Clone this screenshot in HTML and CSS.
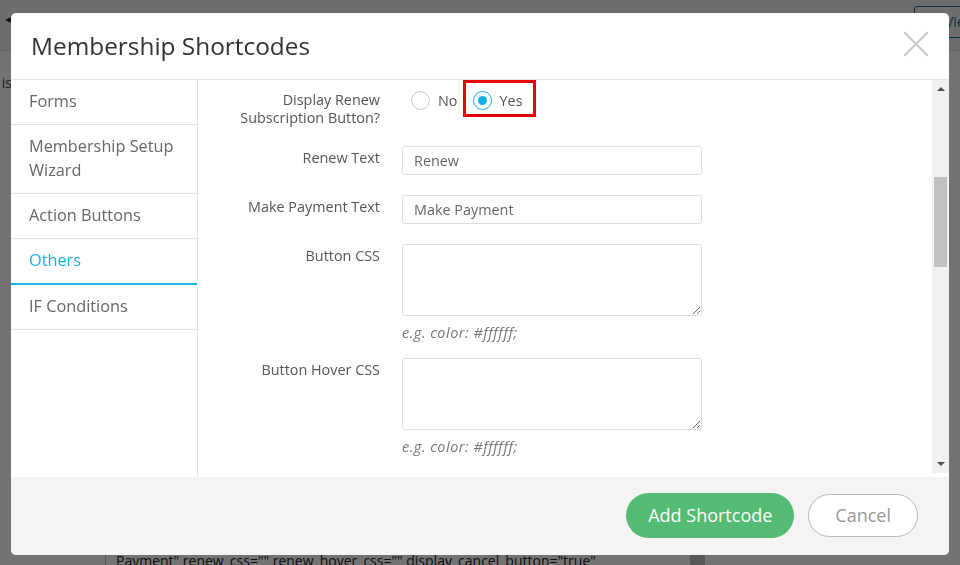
FILE: index.html
```html
<!DOCTYPE html>
<html lang="en">
<head>
    <meta charset="UTF-8">
    <meta name="viewport" content="width=device-width, initial-scale=1.0">
    <title>Membership Shortcodes</title>
    <link rel="stylesheet" href="styles.css">
</head>
<body>
    <!-- page behind the dialog -->
    <div class="page">
        <div class="page-top">
            <span class="back-arrow">&#9666;</span>
            <a class="view-btn" href="#">View</a>
        </div>
        <div class="page-main">
            <div class="page-note"><span>Note: copy the shortcode below, it is</span></div>
        </div>
        <div class="page-code">
            <div class="code-box">[arm_membership_detail renew_text="Renew" make_payment_text="Make
Payment" renew_css="" renew_hover_css="" display_cancel_button="true"</div>
        </div>
    </div>

    <div class="overlay"></div>

    <div class="modal">
        <div class="modal-header">
            <h2 class="modal-title">Membership Shortcodes</h2>
            <button class="close-btn" type="button" aria-label="Close">
                <svg width="26" height="26" viewBox="0 0 26 26">
                    <path d="M1 1L25 25M25 1L1 25" stroke="#c9c9c9" stroke-width="2" fill="none"/>
                </svg>
            </button>
        </div>

        <div class="modal-body">
            <ul class="side-nav">
                <li class="nav-item">Forms</li>
                <li class="nav-item">Membership Setup Wizard</li>
                <li class="nav-item">Action Buttons</li>
                <li class="nav-item active">Others</li>
                <li class="nav-item">IF Conditions</li>
            </ul>

            <div class="form-area">
                <div class="form-row radio-row">
                    <label class="form-label">Display Renew Subscription Button?</label>
                    <div class="radio-group">
                        <span class="radio-option">
                            <span class="radio-circle"></span>No
                        </span>
                        <span class="radio-option checked highlight">
                            <span class="radio-circle"></span>Yes
                        </span>
                    </div>
                </div>

                <div class="form-row">
                    <label class="form-label" for="renew-text">Renew Text</label>
                    <input class="text-input" type="text" id="renew-text" value="Renew">
                </div>

                <div class="form-row">
                    <label class="form-label" for="payment-text">Make Payment Text</label>
                    <input class="text-input" type="text" id="payment-text" value="Make Payment">
                </div>

                <div class="form-row has-hint">
                    <label class="form-label" for="button-css">Button CSS</label>
                    <div class="field">
                        <textarea class="text-area" id="button-css"></textarea>
                        <p class="hint">e.g. color: #ffffff;</p>
                    </div>
                </div>

                <div class="form-row has-hint">
                    <label class="form-label" for="button-hover-css">Button Hover CSS</label>
                    <div class="field">
                        <textarea class="text-area" id="button-hover-css"></textarea>
                        <p class="hint">e.g. color: #ffffff;</p>
                    </div>
                </div>
            </div>

            <div class="scroll-track">
                <span class="arrow-up"></span>
                <span class="scroll-thumb"></span>
                <span class="arrow-down"></span>
            </div>
        </div>

        <div class="modal-footer">
            <button class="btn-primary" type="button">Add Shortcode</button>
            <button class="btn-cancel" type="button">Cancel</button>
        </div>
    </div>
</body>
</html>
```

FILE: styles.css
```css
:root {
    --accent: #1ab0e8;
    --green: #54bb74;
    --border: #dfe3ea;
    --text: #555555;
}

* {
    margin: 0;
    padding: 0;
    box-sizing: border-box;
    font-family: "Open Sans", "DejaVu Sans", sans-serif;
}

body {
    background-color: #ffffff;
    height: 565px;
    overflow: hidden;
}

/* background page */
.page-top {
    height: 51px;
    background-color: #f1f1f1;
    border-bottom: 1px solid #d8d8d8;
    display: flex;
    justify-content: space-between;
    align-items: flex-start;
    padding: 10px 0 0 5px;
}

.back-arrow {
    font-size: 12px;
    color: #222;
}

.view-btn {
    margin-top: -4px;
    margin-right: -36px;
    width: 82px;
    height: 32px;
    border: 1px solid #1f6e8c;
    border-radius: 3px;
    color: #1f6e8c;
    font-size: 14px;
    line-height: 30px;
    padding-left: 30px;
    text-decoration: none;
}

.page-main {
    height: 474px;
    padding-top: 22px;
}

.page-note {
    width: 12px;
    display: flex;
    justify-content: flex-end;
    font-size: 14px;
    color: #444;
}

.page-note span {
    white-space: nowrap;
}

.page-code {
    padding-left: 105px;
}

.code-box {
    width: 600px;
    height: 60px;
    border: 1px solid #bbb;
    border-right: 15px solid #c2c2c2;
    padding: 5px 10px;
    font-size: 14px;
    line-height: 20px;
    color: #222;
    white-space: pre-line;
    overflow: hidden;
}

.overlay {
    position: fixed;
    inset: 0;
    background-color: rgba(0, 0, 0, 0.55);
}

/* dialog */
.modal {
    position: fixed;
    top: 13px;
    left: 11px;
    width: 938px;
    height: 542px;
    background-color: #ffffff;
    border-radius: 5px;
    display: flex;
    flex-direction: column;
    overflow: hidden;
}

.modal-header {
    height: 67px;
    flex-shrink: 0;
    border-bottom: 1px solid #e6e6e6;
    display: flex;
    justify-content: space-between;
    align-items: center;
    padding: 0 20px 2px;
}

.modal-title {
    font-size: 24.4px;
    font-weight: 400;
    color: #333;
}

.close-btn {
    align-self: flex-start;
    margin-top: 18px;
    border: none;
    background: none;
    width: 26px;
    height: 26px;
    cursor: pointer;
}

.close-btn svg {
    display: block;
}

.modal-body {
    flex: 1;
    min-height: 0;
    display: flex;
}

.side-nav {
    list-style: none;
    width: 187px;
    flex-shrink: 0;
    border-right: 1px solid var(--border);
}

.nav-item {
    padding: 9px 18px 11px;
    font-size: 16.3px;
    line-height: 24px;
    color: #666;
    border-bottom: 1px solid var(--border);
    cursor: pointer;
}

.nav-item.active {
    color: var(--accent);
    border-bottom: 2px solid var(--accent);
}

.form-area {
    flex: 1;
    padding: 9px 0 0 20px;
    overflow: hidden;
}

.form-row {
    display: flex;
    gap: 22px;
    margin-bottom: 20px;
}

.form-row.radio-row {
    margin-bottom: 19px;
}

.form-row.has-hint {
    margin-bottom: 16px;
}

.form-label {
    width: 162px;
    flex-shrink: 0;
    text-align: right;
    font-size: 14.4px;
    line-height: 18px;
    color: var(--text);
    padding-top: 3px;
}

.radio-row .form-label {
    padding-top: 2px;
}

.radio-group {
    display: flex;
    gap: 15px;
    padding: 2px 0 0 9px;
}

.radio-option {
    position: relative;
    display: flex;
    align-items: center;
    gap: 8px;
    height: 19px;
    font-size: 14.4px;
    color: var(--text);
}

.radio-circle {
    width: 19px;
    height: 19px;
    border: 1px solid #c8c8c8;
    border-radius: 50%;
    display: flex;
    justify-content: center;
    align-items: center;
}

.radio-option.checked .radio-circle {
    border-color: var(--accent);
}

.radio-option.checked .radio-circle::after {
    content: "";
    width: 9px;
    height: 9px;
    border-radius: 50%;
    background-color: var(--accent);
}

.radio-option.highlight::after {
    content: "";
    position: absolute;
    left: -10px;
    top: -11px;
    right: -14px;
    bottom: -7px;
    border: 3px solid #e8000b;
}

.field {
    width: 300px;
}

.text-input,
.text-area {
    display: block;
    width: 300px;
    border: 1px solid #dbe0e8;
    border-radius: 3px;
    font-size: 14.4px;
    color: #666;
    background-color: #fff;
}

.text-input {
    height: 29px;
    padding: 0 11px;
}

.text-area {
    height: 72px;
    padding: 6px 11px;
    resize: vertical;
}

.hint {
    margin-top: 8px;
    font-size: 14.5px;
    line-height: 18px;
    letter-spacing: 0.5px;
    font-style: italic;
    color: #777;
}

/* fake scrollbar of the form panel */
.scroll-track {
    width: 17px;
    flex-shrink: 0;
    margin-bottom: 4px;
    background-color: #f1f1f1;
    display: flex;
    flex-direction: column;
    align-items: center;
}

.arrow-up {
    margin-top: 7px;
    border-left: 4px solid transparent;
    border-right: 4px solid transparent;
    border-bottom: 4px solid #505050;
}

.scroll-thumb {
    margin-top: 86px;
    width: 13px;
    height: 90px;
    background-color: #c1c1c1;
}

.arrow-down {
    margin-top: auto;
    margin-bottom: 7px;
    border-left: 4px solid transparent;
    border-right: 4px solid transparent;
    border-top: 4px solid #505050;
}

.modal-footer {
    height: 78px;
    flex-shrink: 0;
    background-color: #f4f4f4;
    display: flex;
    justify-content: flex-end;
    align-items: center;
    gap: 14px;
    padding: 0 31px 2px 0;
}

.btn-primary {
    height: 45px;
    padding: 0 22px;
    border: none;
    border-radius: 23px;
    background-color: var(--green);
    color: #fff;
    font-size: 18px;
    cursor: pointer;
}

.btn-cancel {
    height: 43px;
    padding: 0 26px;
    border: 1px solid #b8b8b8;
    border-radius: 22px;
    background-color: #fff;
    color: #999;
    font-size: 18px;
    cursor: pointer;
}
```
